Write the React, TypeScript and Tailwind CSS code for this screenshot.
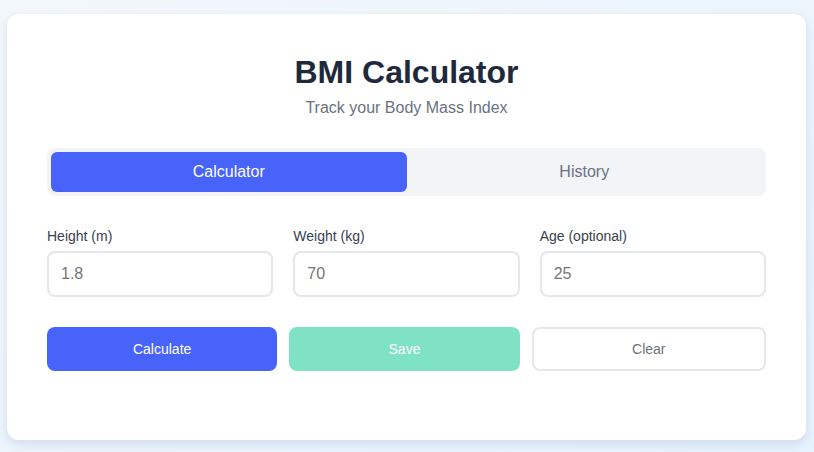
import React, { useState } from "react";

const fields = [
  { label: "Height (m)", value: "1.8" },
  { label: "Weight (kg)", value: "70" },
  { label: "Age (optional)", value: "25" },
];

export default function App() {
  const [tab, setTab] = useState("calculator");

  return (
    <div
      className="min-h-[452px] w-[814px] pt-[14px] pl-[7px] bg-gradient-to-br from-[#f2f7fb] to-[#e6f2fd]"
      style={{ fontFamily: "'Liberation Sans', Arial, sans-serif" }}
    >
      <div className="w-[799px] h-[426px] bg-white rounded-xl shadow-[0_4px_10px_rgba(30,60,120,0.12)] px-10 pt-[38px]">
        <div className="text-center">
          <h1 className="text-[32px] leading-[40px] font-bold text-[#1e293b]">
            BMI Calculator
          </h1>
          <p className="mt-[4px] text-base leading-6 text-[#6b7280]">
            Track your Body Mass Index
          </p>
        </div>

        <div className="mt-[28px] flex bg-[#f3f4f6] rounded-lg p-1 h-12">
          <button
            onClick={() => setTab("calculator")}
            className={
              tab === "calculator"
                ? "flex-1 rounded-md bg-[#4763fa] text-white text-base"
                : "flex-1 rounded-md text-[#6b7280] text-base"
            }
          >
            Calculator
          </button>
          <button
            onClick={() => setTab("history")}
            className={
              tab === "history"
                ? "flex-1 rounded-md bg-[#4763fa] text-white text-base"
                : "flex-1 rounded-md text-[#6b7280] text-base"
            }
          >
            History
          </button>
        </div>

        <div className="mt-[30px] grid grid-cols-3 gap-5">
          {fields.map((f) => (
            <div key={f.label}>
              <label className="block text-sm leading-5 text-[#374151] mb-[5px]">
                {f.label}
              </label>
              <input
                type="text"
                placeholder={f.value}
                className="w-full h-[46px] px-[12px] border-2 border-[#e5e7eb] rounded-lg text-base text-[#374151] placeholder:text-[#757575] outline-none"
              />
            </div>
          ))}
        </div>

        <div className="mt-[30px] flex gap-3">
          <button className="flex-1 h-11 rounded-lg bg-[#4763fa] text-white text-sm">
            Calculate
          </button>
          <button className="flex-1 h-11 rounded-lg bg-[#80e2c5] text-white text-sm">
            Save
          </button>
          <button className="flex-1 h-11 rounded-lg border-2 border-[#e5e7eb] bg-white text-[#6b7280] text-sm">
            Clear
          </button>
        </div>
      </div>
    </div>
  );
}
